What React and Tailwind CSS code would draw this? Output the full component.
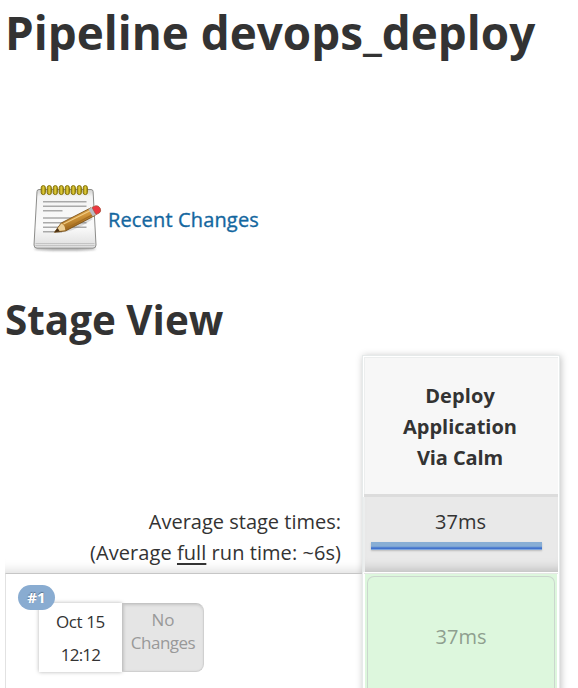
function NotepadIcon() {
  const rings = [0, 1, 2, 3, 4, 5, 6, 7];
  return (
    <svg className="block shrink-0" width="72" height="72" viewBox="0 0 72 72">
      <defs>
        <linearGradient id="paper" x1="0" y1="0" x2="0" y2="1">
          <stop offset="0" stopColor="#cfcfcd" />
          <stop offset="0.12" stopColor="#f4f4f4" />
          <stop offset="0.65" stopColor="#fafafa" />
          <stop offset="1" stopColor="#dcdcdc" />
        </linearGradient>
        <linearGradient id="ring" x1="0" y1="0" x2="1" y2="0">
          <stop offset="0" stopColor="#a08a08" />
          <stop offset="0.5" stopColor="#e0cc3c" />
          <stop offset="1" stopColor="#a08a08" />
        </linearGradient>
        <linearGradient id="wood" x1="0" y1="0" x2="0.35" y2="1">
          <stop offset="0" stopColor="#e8b860" />
          <stop offset="0.5" stopColor="#d2963a" />
          <stop offset="1" stopColor="#8c5a16" />
        </linearGradient>
        <filter id="soft" x="-20%" y="-200%" width="140%" height="500%">
          <feGaussianBlur stdDeviation="1.2" />
        </filter>
      </defs>
      <ellipse cx="34" cy="66" rx="31" ry="1.8" fill="#777" opacity="0.6" filter="url(#soft)" />
      <path d="M8 6.5 H60 Q62 6.5 62.1 8.5 L65 62 Q65 65.2 62 65.2 H6 Q3 65.2 3 62 L6 8.5 Q6 6.5 8 6.5Z" fill="url(#paper)" stroke="#8c8c8a" strokeWidth="1" />
      <path d="M4.5 60.5 H63.5 M4.5 62.5 H63.5" stroke="#bdbdbd" strokeWidth="0.8" />
      <path d="M12 18.7 H55.5 M12 23.3 H55.5 M12 27.7 H31.5 M12 35 H55.5 M12 39.7 H55.5 M12 44.2 H55.5 M12 48.7 H31" stroke="#a9a9a9" strokeWidth="1.5" />
      {rings.map((i) => (
        <rect key={i} x={10.2 + i * 6} y="2.6" width="4.2" height="9" rx="2.1" fill="url(#ring)" stroke="#86740c" strokeWidth="1" />
      ))}
      <path d="M25 50 Q42 50 62 36 L58 33 L32 47Z" fill="#777" opacity="0.25" />
      <path d="M23.5 49.3 L30.2 40 L60 24.8 L64.2 32.4 L34.6 47.9Z" fill="url(#wood)" stroke="#7d531b" strokeWidth="0.9" strokeLinejoin="round" />
      <path d="M24.3 48.6 L30.4 40.6 Q34 42 34.4 47.2Z" fill="#edcf96" />
      <path d="M23.5 49.3 L26.6 45 L28.8 48.6Z" fill="#4a3014" />
      <path d="M32.5 41 L60.5 27" stroke="#f0cc84" strokeWidth="1.2" />
      <path d="M34.4 46 L62.8 31.2" stroke="#a66e22" strokeWidth="1.4" />
      <path d="M57.5 26 L61 24.4 L65 31.6 L61.7 33.6Z" fill="#b9bcc4" />
      <path d="M61 24.4 L64.6 22.8 Q67.4 22.2 69.1 25.1 Q70.6 28.4 68.3 30 L65 31.6Z" fill="#ee3640" stroke="#a8523c" strokeWidth="0.8" />
    </svg>
  );
}

function StageCard() {
  return (
    <div className="flex h-[345px] w-[198px] shrink-0 flex-col border border-[#e6eaea] bg-white p-px shadow-[1px_1px_7px_rgba(0,0,0,0.25)]">
      <div className="flex h-[137px] flex-col items-center border-l border-t border-[#eceeee] bg-[#f7f7f7] pr-[3px] pt-[22px] text-[20px] font-bold leading-[31px]">
        <span className="tracking-[0.1px]">Deploy</span>
        <span>Application</span>
        <span className="tracking-[-0.1px]">Via Calm</span>
      </div>
      <div className="h-[3px] bg-[#dcdcdc]" />
      <div className="-ml-px flex h-[75px] flex-col border-l-2 border-[#eceeee] bg-[#e9e9e9] pl-[6px] pr-[16px] pt-[9px] shadow-[inset_0_-12px_12px_-10px_rgba(0,0,0,0.22)]">
        <span className="ml-[8px] text-center text-[20px] leading-[31px]">37ms</span>
        <div className="mt-[5px] h-[8px] border-b border-[#7fa5dc] bg-linear-to-b from-[#88aed5] from-60% to-[#4272cc] to-85% shadow-[0_1px_2px_rgba(0,0,0,0.2)]" />
      </div>
      <div className="mt-px h-px bg-[#e4e8e4]" />
      <div className="mx-px flex h-[120px] bg-[#ddf7dd] px-[2px] pt-[2px]">
        <div className="flex-1 rounded-t-[7px] border border-b-0 border-[#cbd6ce] pt-[44px] text-center text-[20px] leading-[31px] text-[#8f9f8f]">37ms</div>
      </div>
    </div>
  );
}

function BuildRow() {
  return (
    <div className="relative h-[115px] border-l border-t border-[#e2e2e2] border-t-[#c6c6c6] pl-[33px] pt-[29px]">
      <div className="flex h-[69px] w-[165px]">
        <div className="flex w-[83px] flex-col items-center bg-white pt-[2px] text-[17px] leading-[33px] shadow-[0_0_4px_rgba(0,0,0,0.3)]">
          <span className="tracking-[-0.4px]">Oct 15</span>
          <span className="tracking-[-0.8px]">12:12</span>
        </div>
        <div className="z-10 flex w-[82px] flex-col items-center rounded-r-[8px] border border-[#d0d0d0] border-l-[#c4c4c4] border-t-[#c4c4c4] bg-[#e5e5e5] pt-[4px] text-[17px] leading-[23px] text-[#999] shadow-[inset_1px_1px_3px_rgba(0,0,0,0.15)]">
          <span>No</span>
          <span className="tracking-[-0.5px]">Changes</span>
        </div>
      </div>
      <span className="absolute left-[12px] top-[11px] z-20 flex h-[25px] w-[37px] items-center justify-center rounded-full bg-[#89acd1] text-[15px] font-bold text-white [text-shadow:0_-1px_1px_rgba(0,0,0,0.35)]">#1</span>
    </div>
  );
}

export default function App() {
  return (
    <div className="h-[688px] w-[578px] overflow-hidden whitespace-nowrap bg-white pl-[5px] font-['Open_Sans','Noto_Sans',sans-serif] text-[#333]">
      <h1 className="h-[183px] pt-[2px] text-[45.8px] font-bold leading-[60px]">Pipeline devops_deploy</h1>
      <a className="flex h-[72px] items-center pl-[26px] text-[20px] text-[#14679f]">
        <NotepadIcon />
        <span className="ml-[5px] pt-[2px] tracking-[0.15px] [-webkit-text-stroke:0.35px_#14679f]">Recent Changes</span>
      </a>
      <h2 className="mt-[35px] h-[65px] text-[40.4px] font-bold leading-[60px]">Stage View</h2>
      <div className="flex">
        <div className="flex w-[357px] flex-col">
          <div className="mt-[145px] flex h-[73px] flex-col items-end pr-[21px] pt-[6px] text-[20px] leading-[31px] shadow-[inset_0_-14px_12px_-12px_rgba(0,0,0,0.15)]">
            <span>Average stage times:</span>
            <span className="tracking-[0.06px]">(Average <span className="underline decoration-2 underline-offset-[3px]">full</span> run time: ~6s)</span>
          </div>
          <BuildRow />
        </div>
        <StageCard />
      </div>
    </div>
  );
}
